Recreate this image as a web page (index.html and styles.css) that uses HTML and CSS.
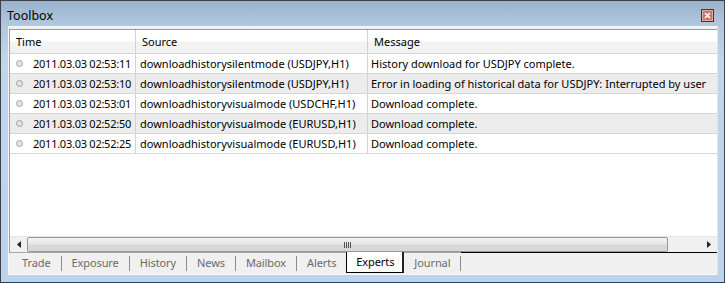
FILE: index.html
```html
<!DOCTYPE html>
<html>
<head>
<meta charset="utf-8">
<link rel="stylesheet" href="styles.css">
</head>
<body>
<div class="window">
  <div class="titlebar">
    <span class="title">Toolbox</span>
    <span class="close">
      <svg width="13" height="13" viewBox="0 0 13 13">
        <rect x="0.5" y="0.5" width="12" height="12" fill="#c9776a" stroke="#5b2a25"/>
        <rect x="1.5" y="1.5" width="10" height="10" fill="none" stroke="#e6a899"/>
        <path d="M4 4 L9 9 M9 4 L4 9" stroke="#ffffff" stroke-width="1.6"/>
      </svg>
    </span>
  </div>
  <div class="panel">
    <div class="list">
      <div class="row head">
        <div class="cell c1">Time</div>
        <div class="cell c2">Source</div>
        <div class="cell c3">Message</div>
      </div>
      <div class="row">
        <div class="cell c1"><span class="dot"></span><span class="time">2011.03.03 02:53:11</span></div>
        <div class="cell c2">downloadhistorysilentmode (USDJPY,H1)</div>
        <div class="cell c3">History download for USDJPY complete.</div>
      </div>
      <div class="row alt">
        <div class="cell c1"><span class="dot"></span><span class="time">2011.03.03 02:53:10</span></div>
        <div class="cell c2">downloadhistorysilentmode (USDJPY,H1)</div>
        <div class="cell c3">Error in loading of historical data for USDJPY: Interrupted by user</div>
      </div>
      <div class="row">
        <div class="cell c1"><span class="dot"></span><span class="time">2011.03.03 02:53:01</span></div>
        <div class="cell c2">downloadhistoryvisualmode (USDCHF,H1)</div>
        <div class="cell c3">Download complete.</div>
      </div>
      <div class="row alt">
        <div class="cell c1"><span class="dot"></span><span class="time">2011.03.03 02:52:50</span></div>
        <div class="cell c2">downloadhistoryvisualmode (EURUSD,H1)</div>
        <div class="cell c3">Download complete.</div>
      </div>
      <div class="row">
        <div class="cell c1"><span class="dot"></span><span class="time">2011.03.03 02:52:25</span></div>
        <div class="cell c2">downloadhistoryvisualmode (EURUSD,H1)</div>
        <div class="cell c3">Download complete.</div>
      </div>
      <div class="empty"></div>
      <div class="hscroll">
        <span class="arrow">
          <svg width="4" height="7" viewBox="0 0 4 7"><path d="M4 0 L0 3.5 L4 7 Z" fill="#222"/></svg>
        </span>
        <div class="track">
          <div class="thumb">
            <span class="grip"></span><span class="grip"></span><span class="grip"></span><span class="grip"></span>
          </div>
          <div class="rest"></div>
        </div>
        <span class="arrow">
          <svg width="4" height="7" viewBox="0 0 4 7"><path d="M0 0 L4 3.5 L0 7 Z" fill="#222"/></svg>
        </span>
      </div>
    </div>
    <div class="tabs">
      <span class="tab">Trade</span><span class="sep"></span>
      <span class="tab">Exposure</span><span class="sep"></span>
      <span class="tab">History</span><span class="sep"></span>
      <span class="tab">News</span><span class="sep"></span>
      <span class="tab">Mailbox</span><span class="sep"></span>
      <span class="tab">Alerts</span>
      <span class="tab active">Experts</span>
      <span class="tab">Journal</span><span class="sep"></span>
      <span class="fill"></span>
    </div>
  </div>
</div>
</body>
</html>
```
FILE: styles.css
```css
* { box-sizing: border-box; }
html, body { margin: 0; padding: 0; }
body {
  font-family: "Noto Sans", "DejaVu Sans", sans-serif;
  font-size: 11px;
  color: #000;
  width: 725px;
  height: 283px;
  overflow: hidden;
}
.window {
  width: 725px;
  height: 283px;
  border: 1px solid #3f4347;
  border-bottom-color: #24425e;
  background: linear-gradient(#9bb2cc 0px, #b3c8e0 25px, #c1d5eb 60px, #bcd3ec 100%);
  display: flex;
  flex-direction: column;
}
.titlebar {
  height: 25px;
  display: flex;
  align-items: center;
  padding: 3px 9px 0 6px;
  flex: none;
}
.title {
  font-size: 12.5px;
  flex: 1;
}
.close { display: flex; margin-top: 1px; margin-right: 1px; }
.panel {
  margin: 0 6px 0 7px;
  height: 249px;
  background: #f0f0f0;
  border: 1px solid #f7f7f7;
  border-right-color: #e4e4e4;
  padding-top: 2px;
  display: flex;
  flex-direction: column;
}
.list {
  background: #fff;
  border-top: 1px solid #9c9c9c;
  border-left: 1px solid #9c9c9c;
  display: flex;
  flex-direction: column;
  height: 223px;
  flex: none;
}
.row {
  display: flex;
  height: 20px;
  border-bottom: 1px solid #d6d6d6;
  flex: none;
  white-space: nowrap;
}
.row.alt { background: #ececec; }
.row.head {
  height: 24px;
  background: linear-gradient(#ffffff 0, #ffffff 11px, #f3f3f3 12px, #f1f1f1 100%);
  border-bottom: 1px solid #d5d5d5;
}
.cell {
  display: flex;
  align-items: center;
  overflow: hidden;
  border-right: 1px solid #d3d3d3;
  padding-left: 4px;
}
.head .cell { padding-left: 6px; }
.c1 { width: 126px; }
.c2 { width: 232px; }
.c3 { flex: 1; border-right: none; padding-left: 3px; }
.time { letter-spacing: -0.25px; }
.dot {
  width: 7px;
  height: 7px;
  border-radius: 50%;
  border: 1px solid #a3a3a3;
  background: #e2e2e2;
  margin: 0 10px 0 2px;
  flex: none;
}
.empty { flex: 1; }
.hscroll {
  height: 16px;
  display: flex;
  align-items: stretch;
  background: #f0f0f0;
  border-top: 1px solid #e6e6e6;
  flex: none;
}
.arrow {
  width: 17px;
  display: flex;
  align-items: center;
  justify-content: center;
  flex: none;
}
.track { flex: 1; display: flex; }
.thumb {
  width: 641px;
  border: 1px solid #979797;
  border-radius: 2px;
  background: linear-gradient(#f4f4f4, #e4e4e4 50%, #d6d6d6 51%, #d9d9d9);
  display: flex;
  align-items: center;
  justify-content: center;
  gap: 1px;
}
.grip { width: 1px; height: 6px; background: #555; }
.rest { flex: 1; }
.tabs {
  height: 22px;
  display: flex;
  align-items: stretch;
  padding-left: 3px;
  color: #6a6a6a;
  font-size: 11px;
  letter-spacing: -0.1px;
  border-top: 1px solid #a7a7a7;
}
.tab {
  display: flex;
  align-items: center;
  padding: 0 10px 2px 10px;
}
.sep {
  width: 1px;
  background: #8a8a8a;
  margin: 3px 0 3px 0;
}
.tab.active {
  color: #000;
  background: #fff;
  border: 1px solid #000;
  border-top: none;
  border-right: 2px solid #222;
  margin-left: 0;
  margin-top: -1px;
  height: 21px;
  padding: 0 8px 2px 9px;
}
.fill { flex: 1; border-top: 1px solid #000; margin-top: -1px; }
```
